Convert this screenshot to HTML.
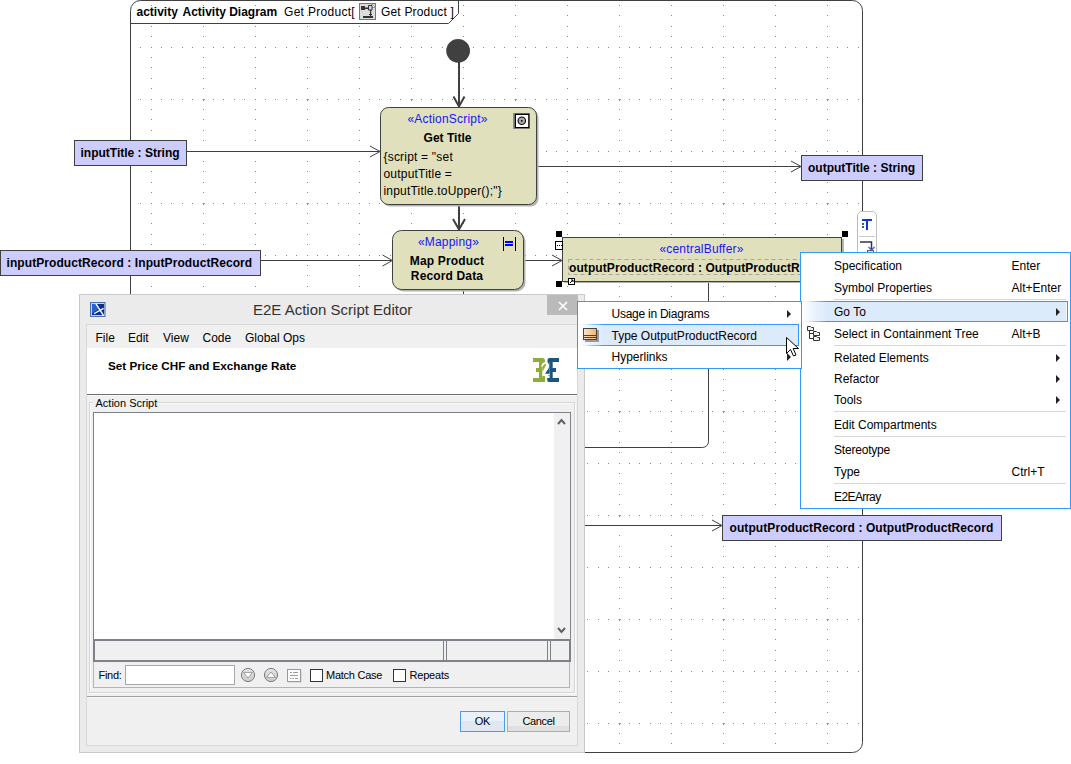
<!DOCTYPE html>
<html><head><meta charset="utf-8">
<style>
html,body{margin:0;padding:0;}
body{width:1071px;height:764px;position:relative;overflow:hidden;background:#fff;font-family:"Liberation Sans",sans-serif;}
.abs{position:absolute;}
svg text{font-family:"Liberation Sans",sans-serif;font-size:12px;}
.t{position:absolute;white-space:pre;font-size:12px;line-height:14px;color:#000;}
.mi{position:absolute;white-space:pre;font-size:12px;line-height:14px;color:#000;}
</style></head><body>
<svg class="abs" style="left:0;top:0" width="1071" height="764" viewBox="0 0 1071 764">
<path d="M140 47h1v1h-1zM140 99h1v1h-1zM140 151h1v1h-1zM140 203h1v1h-1zM140 255h1v1h-1zM140 307h1v1h-1zM140 359h1v1h-1zM140 411h1v1h-1zM140 463h1v1h-1zM140 515h1v1h-1zM140 567h1v1h-1zM140 619h1v1h-1zM140 671h1v1h-1zM140 723h1v1h-1zM151 5h1v1h-1zM151 15h1v1h-1zM151 26h1v1h-1zM151 36h1v1h-1zM151 47h1v1h-1zM151 57h1v1h-1zM151 67h1v1h-1zM151 78h1v1h-1zM151 88h1v1h-1zM151 99h1v1h-1zM151 109h1v1h-1zM151 119h1v1h-1zM151 130h1v1h-1zM151 140h1v1h-1zM151 151h1v1h-1zM151 161h1v1h-1zM151 171h1v1h-1zM151 182h1v1h-1zM151 192h1v1h-1zM151 203h1v1h-1zM151 213h1v1h-1zM151 223h1v1h-1zM151 234h1v1h-1zM151 244h1v1h-1zM151 255h1v1h-1zM151 265h1v1h-1zM151 275h1v1h-1zM151 286h1v1h-1zM151 296h1v1h-1zM151 307h1v1h-1zM151 317h1v1h-1zM151 327h1v1h-1zM151 338h1v1h-1zM151 348h1v1h-1zM151 359h1v1h-1zM151 369h1v1h-1zM151 379h1v1h-1zM151 390h1v1h-1zM151 400h1v1h-1zM151 411h1v1h-1zM151 421h1v1h-1zM151 431h1v1h-1zM151 442h1v1h-1zM151 452h1v1h-1zM151 463h1v1h-1zM151 473h1v1h-1zM151 483h1v1h-1zM151 494h1v1h-1zM151 504h1v1h-1zM151 515h1v1h-1zM151 525h1v1h-1zM151 535h1v1h-1zM151 546h1v1h-1zM151 556h1v1h-1zM151 567h1v1h-1zM151 577h1v1h-1zM151 587h1v1h-1zM151 598h1v1h-1zM151 608h1v1h-1zM151 619h1v1h-1zM151 629h1v1h-1zM151 639h1v1h-1zM151 650h1v1h-1zM151 660h1v1h-1zM151 671h1v1h-1zM151 681h1v1h-1zM151 691h1v1h-1zM151 702h1v1h-1zM151 712h1v1h-1zM151 723h1v1h-1zM151 733h1v1h-1zM151 743h1v1h-1zM161 47h1v1h-1zM161 99h1v1h-1zM161 151h1v1h-1zM161 203h1v1h-1zM161 255h1v1h-1zM161 307h1v1h-1zM161 359h1v1h-1zM161 411h1v1h-1zM161 463h1v1h-1zM161 515h1v1h-1zM161 567h1v1h-1zM161 619h1v1h-1zM161 671h1v1h-1zM161 723h1v1h-1zM171 47h1v1h-1zM171 99h1v1h-1zM171 151h1v1h-1zM171 203h1v1h-1zM171 255h1v1h-1zM171 307h1v1h-1zM171 359h1v1h-1zM171 411h1v1h-1zM171 463h1v1h-1zM171 515h1v1h-1zM171 567h1v1h-1zM171 619h1v1h-1zM171 671h1v1h-1zM171 723h1v1h-1zM182 47h1v1h-1zM182 99h1v1h-1zM182 151h1v1h-1zM182 203h1v1h-1zM182 255h1v1h-1zM182 307h1v1h-1zM182 359h1v1h-1zM182 411h1v1h-1zM182 463h1v1h-1zM182 515h1v1h-1zM182 567h1v1h-1zM182 619h1v1h-1zM182 671h1v1h-1zM182 723h1v1h-1zM192 47h1v1h-1zM192 99h1v1h-1zM192 151h1v1h-1zM192 203h1v1h-1zM192 255h1v1h-1zM192 307h1v1h-1zM192 359h1v1h-1zM192 411h1v1h-1zM192 463h1v1h-1zM192 515h1v1h-1zM192 567h1v1h-1zM192 619h1v1h-1zM192 671h1v1h-1zM192 723h1v1h-1zM203 5h1v1h-1zM203 15h1v1h-1zM203 26h1v1h-1zM203 36h1v1h-1zM203 47h1v1h-1zM203 57h1v1h-1zM203 67h1v1h-1zM203 78h1v1h-1zM203 88h1v1h-1zM203 99h1v1h-1zM203 100h1v1h-1zM203 109h1v1h-1zM203 119h1v1h-1zM203 130h1v1h-1zM203 140h1v1h-1zM203 151h1v1h-1zM203 161h1v1h-1zM203 171h1v1h-1zM203 182h1v1h-1zM203 192h1v1h-1zM203 203h1v1h-1zM203 204h1v1h-1zM203 213h1v1h-1zM203 223h1v1h-1zM203 234h1v1h-1zM203 244h1v1h-1zM203 255h1v1h-1zM203 265h1v1h-1zM203 275h1v1h-1zM203 286h1v1h-1zM203 296h1v1h-1zM203 307h1v1h-1zM203 308h1v1h-1zM203 317h1v1h-1zM203 327h1v1h-1zM203 338h1v1h-1zM203 348h1v1h-1zM203 359h1v1h-1zM203 369h1v1h-1zM203 379h1v1h-1zM203 390h1v1h-1zM203 400h1v1h-1zM203 411h1v1h-1zM203 412h1v1h-1zM203 421h1v1h-1zM203 431h1v1h-1zM203 442h1v1h-1zM203 452h1v1h-1zM203 463h1v1h-1zM203 473h1v1h-1zM203 483h1v1h-1zM203 494h1v1h-1zM203 504h1v1h-1zM203 515h1v1h-1zM203 516h1v1h-1zM203 525h1v1h-1zM203 535h1v1h-1zM203 546h1v1h-1zM203 556h1v1h-1zM203 567h1v1h-1zM203 577h1v1h-1zM203 587h1v1h-1zM203 598h1v1h-1zM203 608h1v1h-1zM203 619h1v1h-1zM203 620h1v1h-1zM203 629h1v1h-1zM203 639h1v1h-1zM203 650h1v1h-1zM203 660h1v1h-1zM203 671h1v1h-1zM203 681h1v1h-1zM203 691h1v1h-1zM203 702h1v1h-1zM203 712h1v1h-1zM203 723h1v1h-1zM203 724h1v1h-1zM203 733h1v1h-1zM203 743h1v1h-1zM204 99h1v1h-1zM204 203h1v1h-1zM204 307h1v1h-1zM204 411h1v1h-1zM204 515h1v1h-1zM204 619h1v1h-1zM204 723h1v1h-1zM213 47h1v1h-1zM213 99h1v1h-1zM213 151h1v1h-1zM213 203h1v1h-1zM213 255h1v1h-1zM213 307h1v1h-1zM213 359h1v1h-1zM213 411h1v1h-1zM213 463h1v1h-1zM213 515h1v1h-1zM213 567h1v1h-1zM213 619h1v1h-1zM213 671h1v1h-1zM213 723h1v1h-1zM223 47h1v1h-1zM223 99h1v1h-1zM223 151h1v1h-1zM223 203h1v1h-1zM223 255h1v1h-1zM223 307h1v1h-1zM223 359h1v1h-1zM223 411h1v1h-1zM223 463h1v1h-1zM223 515h1v1h-1zM223 567h1v1h-1zM223 619h1v1h-1zM223 671h1v1h-1zM223 723h1v1h-1zM234 47h1v1h-1zM234 99h1v1h-1zM234 151h1v1h-1zM234 203h1v1h-1zM234 255h1v1h-1zM234 307h1v1h-1zM234 359h1v1h-1zM234 411h1v1h-1zM234 463h1v1h-1zM234 515h1v1h-1zM234 567h1v1h-1zM234 619h1v1h-1zM234 671h1v1h-1zM234 723h1v1h-1zM244 47h1v1h-1zM244 99h1v1h-1zM244 151h1v1h-1zM244 203h1v1h-1zM244 255h1v1h-1zM244 307h1v1h-1zM244 359h1v1h-1zM244 411h1v1h-1zM244 463h1v1h-1zM244 515h1v1h-1zM244 567h1v1h-1zM244 619h1v1h-1zM244 671h1v1h-1zM244 723h1v1h-1zM255 5h1v1h-1zM255 15h1v1h-1zM255 26h1v1h-1zM255 36h1v1h-1zM255 47h1v1h-1zM255 57h1v1h-1zM255 67h1v1h-1zM255 78h1v1h-1zM255 88h1v1h-1zM255 99h1v1h-1zM255 109h1v1h-1zM255 119h1v1h-1zM255 130h1v1h-1zM255 140h1v1h-1zM255 151h1v1h-1zM255 161h1v1h-1zM255 171h1v1h-1zM255 182h1v1h-1zM255 192h1v1h-1zM255 203h1v1h-1zM255 213h1v1h-1zM255 223h1v1h-1zM255 234h1v1h-1zM255 244h1v1h-1zM255 255h1v1h-1zM255 265h1v1h-1zM255 275h1v1h-1zM255 286h1v1h-1zM255 296h1v1h-1zM255 307h1v1h-1zM255 317h1v1h-1zM255 327h1v1h-1zM255 338h1v1h-1zM255 348h1v1h-1zM255 359h1v1h-1zM255 369h1v1h-1zM255 379h1v1h-1zM255 390h1v1h-1zM255 400h1v1h-1zM255 411h1v1h-1zM255 421h1v1h-1zM255 431h1v1h-1zM255 442h1v1h-1zM255 452h1v1h-1zM255 463h1v1h-1zM255 473h1v1h-1zM255 483h1v1h-1zM255 494h1v1h-1zM255 504h1v1h-1zM255 515h1v1h-1zM255 525h1v1h-1zM255 535h1v1h-1zM255 546h1v1h-1zM255 556h1v1h-1zM255 567h1v1h-1zM255 577h1v1h-1zM255 587h1v1h-1zM255 598h1v1h-1zM255 608h1v1h-1zM255 619h1v1h-1zM255 629h1v1h-1zM255 639h1v1h-1zM255 650h1v1h-1zM255 660h1v1h-1zM255 671h1v1h-1zM255 681h1v1h-1zM255 691h1v1h-1zM255 702h1v1h-1zM255 712h1v1h-1zM255 723h1v1h-1zM255 733h1v1h-1zM255 743h1v1h-1zM265 47h1v1h-1zM265 99h1v1h-1zM265 151h1v1h-1zM265 203h1v1h-1zM265 255h1v1h-1zM265 307h1v1h-1zM265 359h1v1h-1zM265 411h1v1h-1zM265 463h1v1h-1zM265 515h1v1h-1zM265 567h1v1h-1zM265 619h1v1h-1zM265 671h1v1h-1zM265 723h1v1h-1zM275 47h1v1h-1zM275 99h1v1h-1zM275 151h1v1h-1zM275 203h1v1h-1zM275 255h1v1h-1zM275 307h1v1h-1zM275 359h1v1h-1zM275 411h1v1h-1zM275 463h1v1h-1zM275 515h1v1h-1zM275 567h1v1h-1zM275 619h1v1h-1zM275 671h1v1h-1zM275 723h1v1h-1zM286 47h1v1h-1zM286 99h1v1h-1zM286 151h1v1h-1zM286 203h1v1h-1zM286 255h1v1h-1zM286 307h1v1h-1zM286 359h1v1h-1zM286 411h1v1h-1zM286 463h1v1h-1zM286 515h1v1h-1zM286 567h1v1h-1zM286 619h1v1h-1zM286 671h1v1h-1zM286 723h1v1h-1zM296 47h1v1h-1zM296 99h1v1h-1zM296 151h1v1h-1zM296 203h1v1h-1zM296 255h1v1h-1zM296 307h1v1h-1zM296 359h1v1h-1zM296 411h1v1h-1zM296 463h1v1h-1zM296 515h1v1h-1zM296 567h1v1h-1zM296 619h1v1h-1zM296 671h1v1h-1zM296 723h1v1h-1zM307 5h1v1h-1zM307 15h1v1h-1zM307 26h1v1h-1zM307 36h1v1h-1zM307 47h1v1h-1zM307 57h1v1h-1zM307 67h1v1h-1zM307 78h1v1h-1zM307 88h1v1h-1zM307 99h1v1h-1zM307 100h1v1h-1zM307 109h1v1h-1zM307 119h1v1h-1zM307 130h1v1h-1zM307 140h1v1h-1zM307 151h1v1h-1zM307 161h1v1h-1zM307 171h1v1h-1zM307 182h1v1h-1zM307 192h1v1h-1zM307 203h1v1h-1zM307 204h1v1h-1zM307 213h1v1h-1zM307 223h1v1h-1zM307 234h1v1h-1zM307 244h1v1h-1zM307 255h1v1h-1zM307 265h1v1h-1zM307 275h1v1h-1zM307 286h1v1h-1zM307 296h1v1h-1zM307 307h1v1h-1zM307 308h1v1h-1zM307 317h1v1h-1zM307 327h1v1h-1zM307 338h1v1h-1zM307 348h1v1h-1zM307 359h1v1h-1zM307 369h1v1h-1zM307 379h1v1h-1zM307 390h1v1h-1zM307 400h1v1h-1zM307 411h1v1h-1zM307 412h1v1h-1zM307 421h1v1h-1zM307 431h1v1h-1zM307 442h1v1h-1zM307 452h1v1h-1zM307 463h1v1h-1zM307 473h1v1h-1zM307 483h1v1h-1zM307 494h1v1h-1zM307 504h1v1h-1zM307 515h1v1h-1zM307 516h1v1h-1zM307 525h1v1h-1zM307 535h1v1h-1zM307 546h1v1h-1zM307 556h1v1h-1zM307 567h1v1h-1zM307 577h1v1h-1zM307 587h1v1h-1zM307 598h1v1h-1zM307 608h1v1h-1zM307 619h1v1h-1zM307 620h1v1h-1zM307 629h1v1h-1zM307 639h1v1h-1zM307 650h1v1h-1zM307 660h1v1h-1zM307 671h1v1h-1zM307 681h1v1h-1zM307 691h1v1h-1zM307 702h1v1h-1zM307 712h1v1h-1zM307 723h1v1h-1zM307 724h1v1h-1zM307 733h1v1h-1zM307 743h1v1h-1zM308 99h1v1h-1zM308 203h1v1h-1zM308 307h1v1h-1zM308 411h1v1h-1zM308 515h1v1h-1zM308 619h1v1h-1zM308 723h1v1h-1zM317 47h1v1h-1zM317 99h1v1h-1zM317 151h1v1h-1zM317 203h1v1h-1zM317 255h1v1h-1zM317 307h1v1h-1zM317 359h1v1h-1zM317 411h1v1h-1zM317 463h1v1h-1zM317 515h1v1h-1zM317 567h1v1h-1zM317 619h1v1h-1zM317 671h1v1h-1zM317 723h1v1h-1zM327 47h1v1h-1zM327 99h1v1h-1zM327 151h1v1h-1zM327 203h1v1h-1zM327 255h1v1h-1zM327 307h1v1h-1zM327 359h1v1h-1zM327 411h1v1h-1zM327 463h1v1h-1zM327 515h1v1h-1zM327 567h1v1h-1zM327 619h1v1h-1zM327 671h1v1h-1zM327 723h1v1h-1zM338 47h1v1h-1zM338 99h1v1h-1zM338 151h1v1h-1zM338 203h1v1h-1zM338 255h1v1h-1zM338 307h1v1h-1zM338 359h1v1h-1zM338 411h1v1h-1zM338 463h1v1h-1zM338 515h1v1h-1zM338 567h1v1h-1zM338 619h1v1h-1zM338 671h1v1h-1zM338 723h1v1h-1zM348 47h1v1h-1zM348 99h1v1h-1zM348 151h1v1h-1zM348 203h1v1h-1zM348 255h1v1h-1zM348 307h1v1h-1zM348 359h1v1h-1zM348 411h1v1h-1zM348 463h1v1h-1zM348 515h1v1h-1zM348 567h1v1h-1zM348 619h1v1h-1zM348 671h1v1h-1zM348 723h1v1h-1zM359 5h1v1h-1zM359 15h1v1h-1zM359 26h1v1h-1zM359 36h1v1h-1zM359 47h1v1h-1zM359 57h1v1h-1zM359 67h1v1h-1zM359 78h1v1h-1zM359 88h1v1h-1zM359 99h1v1h-1zM359 109h1v1h-1zM359 119h1v1h-1zM359 130h1v1h-1zM359 140h1v1h-1zM359 151h1v1h-1zM359 161h1v1h-1zM359 171h1v1h-1zM359 182h1v1h-1zM359 192h1v1h-1zM359 203h1v1h-1zM359 213h1v1h-1zM359 223h1v1h-1zM359 234h1v1h-1zM359 244h1v1h-1zM359 255h1v1h-1zM359 265h1v1h-1zM359 275h1v1h-1zM359 286h1v1h-1zM359 296h1v1h-1zM359 307h1v1h-1zM359 317h1v1h-1zM359 327h1v1h-1zM359 338h1v1h-1zM359 348h1v1h-1zM359 359h1v1h-1zM359 369h1v1h-1zM359 379h1v1h-1zM359 390h1v1h-1zM359 400h1v1h-1zM359 411h1v1h-1zM359 421h1v1h-1zM359 431h1v1h-1zM359 442h1v1h-1zM359 452h1v1h-1zM359 463h1v1h-1zM359 473h1v1h-1zM359 483h1v1h-1zM359 494h1v1h-1zM359 504h1v1h-1zM359 515h1v1h-1zM359 525h1v1h-1zM359 535h1v1h-1zM359 546h1v1h-1zM359 556h1v1h-1zM359 567h1v1h-1zM359 577h1v1h-1zM359 587h1v1h-1zM359 598h1v1h-1zM359 608h1v1h-1zM359 619h1v1h-1zM359 629h1v1h-1zM359 639h1v1h-1zM359 650h1v1h-1zM359 660h1v1h-1zM359 671h1v1h-1zM359 681h1v1h-1zM359 691h1v1h-1zM359 702h1v1h-1zM359 712h1v1h-1zM359 723h1v1h-1zM359 733h1v1h-1zM359 743h1v1h-1zM369 47h1v1h-1zM369 99h1v1h-1zM369 151h1v1h-1zM369 203h1v1h-1zM369 255h1v1h-1zM369 307h1v1h-1zM369 359h1v1h-1zM369 411h1v1h-1zM369 463h1v1h-1zM369 515h1v1h-1zM369 567h1v1h-1zM369 619h1v1h-1zM369 671h1v1h-1zM369 723h1v1h-1zM379 47h1v1h-1zM379 99h1v1h-1zM379 151h1v1h-1zM379 203h1v1h-1zM379 255h1v1h-1zM379 307h1v1h-1zM379 359h1v1h-1zM379 411h1v1h-1zM379 463h1v1h-1zM379 515h1v1h-1zM379 567h1v1h-1zM379 619h1v1h-1zM379 671h1v1h-1zM379 723h1v1h-1zM390 47h1v1h-1zM390 99h1v1h-1zM390 151h1v1h-1zM390 203h1v1h-1zM390 255h1v1h-1zM390 307h1v1h-1zM390 359h1v1h-1zM390 411h1v1h-1zM390 463h1v1h-1zM390 515h1v1h-1zM390 567h1v1h-1zM390 619h1v1h-1zM390 671h1v1h-1zM390 723h1v1h-1zM400 47h1v1h-1zM400 99h1v1h-1zM400 151h1v1h-1zM400 203h1v1h-1zM400 255h1v1h-1zM400 307h1v1h-1zM400 359h1v1h-1zM400 411h1v1h-1zM400 463h1v1h-1zM400 515h1v1h-1zM400 567h1v1h-1zM400 619h1v1h-1zM400 671h1v1h-1zM400 723h1v1h-1zM411 5h1v1h-1zM411 15h1v1h-1zM411 26h1v1h-1zM411 36h1v1h-1zM411 47h1v1h-1zM411 57h1v1h-1zM411 67h1v1h-1zM411 78h1v1h-1zM411 88h1v1h-1zM411 99h1v1h-1zM411 100h1v1h-1zM411 109h1v1h-1zM411 119h1v1h-1zM411 130h1v1h-1zM411 140h1v1h-1zM411 151h1v1h-1zM411 161h1v1h-1zM411 171h1v1h-1zM411 182h1v1h-1zM411 192h1v1h-1zM411 203h1v1h-1zM411 204h1v1h-1zM411 213h1v1h-1zM411 223h1v1h-1zM411 234h1v1h-1zM411 244h1v1h-1zM411 255h1v1h-1zM411 265h1v1h-1zM411 275h1v1h-1zM411 286h1v1h-1zM411 296h1v1h-1zM411 307h1v1h-1zM411 308h1v1h-1zM411 317h1v1h-1zM411 327h1v1h-1zM411 338h1v1h-1zM411 348h1v1h-1zM411 359h1v1h-1zM411 369h1v1h-1zM411 379h1v1h-1zM411 390h1v1h-1zM411 400h1v1h-1zM411 411h1v1h-1zM411 412h1v1h-1zM411 421h1v1h-1zM411 431h1v1h-1zM411 442h1v1h-1zM411 452h1v1h-1zM411 463h1v1h-1zM411 473h1v1h-1zM411 483h1v1h-1zM411 494h1v1h-1zM411 504h1v1h-1zM411 515h1v1h-1zM411 516h1v1h-1zM411 525h1v1h-1zM411 535h1v1h-1zM411 546h1v1h-1zM411 556h1v1h-1zM411 567h1v1h-1zM411 577h1v1h-1zM411 587h1v1h-1zM411 598h1v1h-1zM411 608h1v1h-1zM411 619h1v1h-1zM411 620h1v1h-1zM411 629h1v1h-1zM411 639h1v1h-1zM411 650h1v1h-1zM411 660h1v1h-1zM411 671h1v1h-1zM411 681h1v1h-1zM411 691h1v1h-1zM411 702h1v1h-1zM411 712h1v1h-1zM411 723h1v1h-1zM411 724h1v1h-1zM411 733h1v1h-1zM411 743h1v1h-1zM412 99h1v1h-1zM412 203h1v1h-1zM412 307h1v1h-1zM412 411h1v1h-1zM412 515h1v1h-1zM412 619h1v1h-1zM412 723h1v1h-1zM421 47h1v1h-1zM421 99h1v1h-1zM421 151h1v1h-1zM421 203h1v1h-1zM421 255h1v1h-1zM421 307h1v1h-1zM421 359h1v1h-1zM421 411h1v1h-1zM421 463h1v1h-1zM421 515h1v1h-1zM421 567h1v1h-1zM421 619h1v1h-1zM421 671h1v1h-1zM421 723h1v1h-1zM431 47h1v1h-1zM431 99h1v1h-1zM431 151h1v1h-1zM431 203h1v1h-1zM431 255h1v1h-1zM431 307h1v1h-1zM431 359h1v1h-1zM431 411h1v1h-1zM431 463h1v1h-1zM431 515h1v1h-1zM431 567h1v1h-1zM431 619h1v1h-1zM431 671h1v1h-1zM431 723h1v1h-1zM442 47h1v1h-1zM442 99h1v1h-1zM442 151h1v1h-1zM442 203h1v1h-1zM442 255h1v1h-1zM442 307h1v1h-1zM442 359h1v1h-1zM442 411h1v1h-1zM442 463h1v1h-1zM442 515h1v1h-1zM442 567h1v1h-1zM442 619h1v1h-1zM442 671h1v1h-1zM442 723h1v1h-1zM452 47h1v1h-1zM452 99h1v1h-1zM452 151h1v1h-1zM452 203h1v1h-1zM452 255h1v1h-1zM452 307h1v1h-1zM452 359h1v1h-1zM452 411h1v1h-1zM452 463h1v1h-1zM452 515h1v1h-1zM452 567h1v1h-1zM452 619h1v1h-1zM452 671h1v1h-1zM452 723h1v1h-1zM463 5h1v1h-1zM463 15h1v1h-1zM463 26h1v1h-1zM463 36h1v1h-1zM463 47h1v1h-1zM463 57h1v1h-1zM463 67h1v1h-1zM463 78h1v1h-1zM463 88h1v1h-1zM463 99h1v1h-1zM463 109h1v1h-1zM463 119h1v1h-1zM463 130h1v1h-1zM463 140h1v1h-1zM463 151h1v1h-1zM463 161h1v1h-1zM463 171h1v1h-1zM463 182h1v1h-1zM463 192h1v1h-1zM463 203h1v1h-1zM463 213h1v1h-1zM463 223h1v1h-1zM463 234h1v1h-1zM463 244h1v1h-1zM463 255h1v1h-1zM463 265h1v1h-1zM463 275h1v1h-1zM463 286h1v1h-1zM463 296h1v1h-1zM463 307h1v1h-1zM463 317h1v1h-1zM463 327h1v1h-1zM463 338h1v1h-1zM463 348h1v1h-1zM463 359h1v1h-1zM463 369h1v1h-1zM463 379h1v1h-1zM463 390h1v1h-1zM463 400h1v1h-1zM463 411h1v1h-1zM463 421h1v1h-1zM463 431h1v1h-1zM463 442h1v1h-1zM463 452h1v1h-1zM463 463h1v1h-1zM463 473h1v1h-1zM463 483h1v1h-1zM463 494h1v1h-1zM463 504h1v1h-1zM463 515h1v1h-1zM463 525h1v1h-1zM463 535h1v1h-1zM463 546h1v1h-1zM463 556h1v1h-1zM463 567h1v1h-1zM463 577h1v1h-1zM463 587h1v1h-1zM463 598h1v1h-1zM463 608h1v1h-1zM463 619h1v1h-1zM463 629h1v1h-1zM463 639h1v1h-1zM463 650h1v1h-1zM463 660h1v1h-1zM463 671h1v1h-1zM463 681h1v1h-1zM463 691h1v1h-1zM463 702h1v1h-1zM463 712h1v1h-1zM463 723h1v1h-1zM463 733h1v1h-1zM463 743h1v1h-1zM473 47h1v1h-1zM473 99h1v1h-1zM473 151h1v1h-1zM473 203h1v1h-1zM473 255h1v1h-1zM473 307h1v1h-1zM473 359h1v1h-1zM473 411h1v1h-1zM473 463h1v1h-1zM473 515h1v1h-1zM473 567h1v1h-1zM473 619h1v1h-1zM473 671h1v1h-1zM473 723h1v1h-1zM483 47h1v1h-1zM483 99h1v1h-1zM483 151h1v1h-1zM483 203h1v1h-1zM483 255h1v1h-1zM483 307h1v1h-1zM483 359h1v1h-1zM483 411h1v1h-1zM483 463h1v1h-1zM483 515h1v1h-1zM483 567h1v1h-1zM483 619h1v1h-1zM483 671h1v1h-1zM483 723h1v1h-1zM494 47h1v1h-1zM494 99h1v1h-1zM494 151h1v1h-1zM494 203h1v1h-1zM494 255h1v1h-1zM494 307h1v1h-1zM494 359h1v1h-1zM494 411h1v1h-1zM494 463h1v1h-1zM494 515h1v1h-1zM494 567h1v1h-1zM494 619h1v1h-1zM494 671h1v1h-1zM494 723h1v1h-1zM504 47h1v1h-1zM504 99h1v1h-1zM504 151h1v1h-1zM504 203h1v1h-1zM504 255h1v1h-1zM504 307h1v1h-1zM504 359h1v1h-1zM504 411h1v1h-1zM504 463h1v1h-1zM504 515h1v1h-1zM504 567h1v1h-1zM504 619h1v1h-1zM504 671h1v1h-1zM504 723h1v1h-1zM515 5h1v1h-1zM515 15h1v1h-1zM515 26h1v1h-1zM515 36h1v1h-1zM515 47h1v1h-1zM515 57h1v1h-1zM515 67h1v1h-1zM515 78h1v1h-1zM515 88h1v1h-1zM515 99h1v1h-1zM515 100h1v1h-1zM515 109h1v1h-1zM515 119h1v1h-1zM515 130h1v1h-1zM515 140h1v1h-1zM515 151h1v1h-1zM515 161h1v1h-1zM515 171h1v1h-1zM515 182h1v1h-1zM515 192h1v1h-1zM515 203h1v1h-1zM515 204h1v1h-1zM515 213h1v1h-1zM515 223h1v1h-1zM515 234h1v1h-1zM515 244h1v1h-1zM515 255h1v1h-1zM515 265h1v1h-1zM515 275h1v1h-1zM515 286h1v1h-1zM515 296h1v1h-1zM515 307h1v1h-1zM515 308h1v1h-1zM515 317h1v1h-1zM515 327h1v1h-1zM515 338h1v1h-1zM515 348h1v1h-1zM515 359h1v1h-1zM515 369h1v1h-1zM515 379h1v1h-1zM515 390h1v1h-1zM515 400h1v1h-1zM515 411h1v1h-1zM515 412h1v1h-1zM515 421h1v1h-1zM515 431h1v1h-1zM515 442h1v1h-1zM515 452h1v1h-1zM515 463h1v1h-1zM515 473h1v1h-1zM515 483h1v1h-1zM515 494h1v1h-1zM515 504h1v1h-1zM515 515h1v1h-1zM515 516h1v1h-1zM515 525h1v1h-1zM515 535h1v1h-1zM515 546h1v1h-1zM515 556h1v1h-1zM515 567h1v1h-1zM515 577h1v1h-1zM515 587h1v1h-1zM515 598h1v1h-1zM515 608h1v1h-1zM515 619h1v1h-1zM515 620h1v1h-1zM515 629h1v1h-1zM515 639h1v1h-1zM515 650h1v1h-1zM515 660h1v1h-1zM515 671h1v1h-1zM515 681h1v1h-1zM515 691h1v1h-1zM515 702h1v1h-1zM515 712h1v1h-1zM515 723h1v1h-1zM515 724h1v1h-1zM515 733h1v1h-1zM515 743h1v1h-1zM516 99h1v1h-1zM516 203h1v1h-1zM516 307h1v1h-1zM516 411h1v1h-1zM516 515h1v1h-1zM516 619h1v1h-1zM516 723h1v1h-1zM525 47h1v1h-1zM525 99h1v1h-1zM525 151h1v1h-1zM525 203h1v1h-1zM525 255h1v1h-1zM525 307h1v1h-1zM525 359h1v1h-1zM525 411h1v1h-1zM525 463h1v1h-1zM525 515h1v1h-1zM525 567h1v1h-1zM525 619h1v1h-1zM525 671h1v1h-1zM525 723h1v1h-1zM535 47h1v1h-1zM535 99h1v1h-1zM535 151h1v1h-1zM535 203h1v1h-1zM535 255h1v1h-1zM535 307h1v1h-1zM535 359h1v1h-1zM535 411h1v1h-1zM535 463h1v1h-1zM535 515h1v1h-1zM535 567h1v1h-1zM535 619h1v1h-1zM535 671h1v1h-1zM535 723h1v1h-1zM546 47h1v1h-1zM546 99h1v1h-1zM546 151h1v1h-1zM546 203h1v1h-1zM546 255h1v1h-1zM546 307h1v1h-1zM546 359h1v1h-1zM546 411h1v1h-1zM546 463h1v1h-1zM546 515h1v1h-1zM546 567h1v1h-1zM546 619h1v1h-1zM546 671h1v1h-1zM546 723h1v1h-1zM556 47h1v1h-1zM556 99h1v1h-1zM556 151h1v1h-1zM556 203h1v1h-1zM556 255h1v1h-1zM556 307h1v1h-1zM556 359h1v1h-1zM556 411h1v1h-1zM556 463h1v1h-1zM556 515h1v1h-1zM556 567h1v1h-1zM556 619h1v1h-1zM556 671h1v1h-1zM556 723h1v1h-1zM567 5h1v1h-1zM567 15h1v1h-1zM567 26h1v1h-1zM567 36h1v1h-1zM567 47h1v1h-1zM567 57h1v1h-1zM567 67h1v1h-1zM567 78h1v1h-1zM567 88h1v1h-1zM567 99h1v1h-1zM567 109h1v1h-1zM567 119h1v1h-1zM567 130h1v1h-1zM567 140h1v1h-1zM567 151h1v1h-1zM567 161h1v1h-1zM567 171h1v1h-1zM567 182h1v1h-1zM567 192h1v1h-1zM567 203h1v1h-1zM567 213h1v1h-1zM567 223h1v1h-1zM567 234h1v1h-1zM567 244h1v1h-1zM567 255h1v1h-1zM567 265h1v1h-1zM567 275h1v1h-1zM567 286h1v1h-1zM567 296h1v1h-1zM567 307h1v1h-1zM567 317h1v1h-1zM567 327h1v1h-1zM567 338h1v1h-1zM567 348h1v1h-1zM567 359h1v1h-1zM567 369h1v1h-1zM567 379h1v1h-1zM567 390h1v1h-1zM567 400h1v1h-1zM567 411h1v1h-1zM567 421h1v1h-1zM567 431h1v1h-1zM567 442h1v1h-1zM567 452h1v1h-1zM567 463h1v1h-1zM567 473h1v1h-1zM567 483h1v1h-1zM567 494h1v1h-1zM567 504h1v1h-1zM567 515h1v1h-1zM567 525h1v1h-1zM567 535h1v1h-1zM567 546h1v1h-1zM567 556h1v1h-1zM567 567h1v1h-1zM567 577h1v1h-1zM567 587h1v1h-1zM567 598h1v1h-1zM567 608h1v1h-1zM567 619h1v1h-1zM567 629h1v1h-1zM567 639h1v1h-1zM567 650h1v1h-1zM567 660h1v1h-1zM567 671h1v1h-1zM567 681h1v1h-1zM567 691h1v1h-1zM567 702h1v1h-1zM567 712h1v1h-1zM567 723h1v1h-1zM567 733h1v1h-1zM567 743h1v1h-1zM577 47h1v1h-1zM577 99h1v1h-1zM577 151h1v1h-1zM577 203h1v1h-1zM577 255h1v1h-1zM577 307h1v1h-1zM577 359h1v1h-1zM577 411h1v1h-1zM577 463h1v1h-1zM577 515h1v1h-1zM577 567h1v1h-1zM577 619h1v1h-1zM577 671h1v1h-1zM577 723h1v1h-1zM587 47h1v1h-1zM587 99h1v1h-1zM587 151h1v1h-1zM587 203h1v1h-1zM587 255h1v1h-1zM587 307h1v1h-1zM587 359h1v1h-1zM587 411h1v1h-1zM587 463h1v1h-1zM587 515h1v1h-1zM587 567h1v1h-1zM587 619h1v1h-1zM587 671h1v1h-1zM587 723h1v1h-1zM598 47h1v1h-1zM598 99h1v1h-1zM598 151h1v1h-1zM598 203h1v1h-1zM598 255h1v1h-1zM598 307h1v1h-1zM598 359h1v1h-1zM598 411h1v1h-1zM598 463h1v1h-1zM598 515h1v1h-1zM598 567h1v1h-1zM598 619h1v1h-1zM598 671h1v1h-1zM598 723h1v1h-1zM608 47h1v1h-1zM608 99h1v1h-1zM608 151h1v1h-1zM608 203h1v1h-1zM608 255h1v1h-1zM608 307h1v1h-1zM608 359h1v1h-1zM608 411h1v1h-1zM608 463h1v1h-1zM608 515h1v1h-1zM608 567h1v1h-1zM608 619h1v1h-1zM608 671h1v1h-1zM608 723h1v1h-1zM619 5h1v1h-1zM619 15h1v1h-1zM619 26h1v1h-1zM619 36h1v1h-1zM619 47h1v1h-1zM619 57h1v1h-1zM619 67h1v1h-1zM619 78h1v1h-1zM619 88h1v1h-1zM619 99h1v1h-1zM619 100h1v1h-1zM619 109h1v1h-1zM619 119h1v1h-1zM619 130h1v1h-1zM619 140h1v1h-1zM619 151h1v1h-1zM619 161h1v1h-1zM619 171h1v1h-1zM619 182h1v1h-1zM619 192h1v1h-1zM619 203h1v1h-1zM619 204h1v1h-1zM619 213h1v1h-1zM619 223h1v1h-1zM619 234h1v1h-1zM619 244h1v1h-1zM619 255h1v1h-1zM619 265h1v1h-1zM619 275h1v1h-1zM619 286h1v1h-1zM619 296h1v1h-1zM619 307h1v1h-1zM619 308h1v1h-1zM619 317h1v1h-1zM619 327h1v1h-1zM619 338h1v1h-1zM619 348h1v1h-1zM619 359h1v1h-1zM619 369h1v1h-1zM619 379h1v1h-1zM619 390h1v1h-1zM619 400h1v1h-1zM619 411h1v1h-1zM619 412h1v1h-1zM619 421h1v1h-1zM619 431h1v1h-1zM619 442h1v1h-1zM619 452h1v1h-1zM619 463h1v1h-1zM619 473h1v1h-1zM619 483h1v1h-1zM619 494h1v1h-1zM619 504h1v1h-1zM619 515h1v1h-1zM619 516h1v1h-1zM619 525h1v1h-1zM619 535h1v1h-1zM619 546h1v1h-1zM619 556h1v1h-1zM619 567h1v1h-1zM619 577h1v1h-1zM619 587h1v1h-1zM619 598h1v1h-1zM619 608h1v1h-1zM619 619h1v1h-1zM619 620h1v1h-1zM619 629h1v1h-1zM619 639h1v1h-1zM619 650h1v1h-1zM619 660h1v1h-1zM619 671h1v1h-1zM619 681h1v1h-1zM619 691h1v1h-1zM619 702h1v1h-1zM619 712h1v1h-1zM619 723h1v1h-1zM619 724h1v1h-1zM619 733h1v1h-1zM619 743h1v1h-1zM620 99h1v1h-1zM620 203h1v1h-1zM620 307h1v1h-1zM620 411h1v1h-1zM620 515h1v1h-1zM620 619h1v1h-1zM620 723h1v1h-1zM629 47h1v1h-1zM629 99h1v1h-1zM629 151h1v1h-1zM629 203h1v1h-1zM629 255h1v1h-1zM629 307h1v1h-1zM629 359h1v1h-1zM629 411h1v1h-1zM629 463h1v1h-1zM629 515h1v1h-1zM629 567h1v1h-1zM629 619h1v1h-1zM629 671h1v1h-1zM629 723h1v1h-1zM639 47h1v1h-1zM639 99h1v1h-1zM639 151h1v1h-1zM639 203h1v1h-1zM639 255h1v1h-1zM639 307h1v1h-1zM639 359h1v1h-1zM639 411h1v1h-1zM639 463h1v1h-1zM639 515h1v1h-1zM639 567h1v1h-1zM639 619h1v1h-1zM639 671h1v1h-1zM639 723h1v1h-1zM650 47h1v1h-1zM650 99h1v1h-1zM650 151h1v1h-1zM650 203h1v1h-1zM650 255h1v1h-1zM650 307h1v1h-1zM650 359h1v1h-1zM650 411h1v1h-1zM650 463h1v1h-1zM650 515h1v1h-1zM650 567h1v1h-1zM650 619h1v1h-1zM650 671h1v1h-1zM650 723h1v1h-1zM660 47h1v1h-1zM660 99h1v1h-1zM660 151h1v1h-1zM660 203h1v1h-1zM660 255h1v1h-1zM660 307h1v1h-1zM660 359h1v1h-1zM660 411h1v1h-1zM660 463h1v1h-1zM660 515h1v1h-1zM660 567h1v1h-1zM660 619h1v1h-1zM660 671h1v1h-1zM660 723h1v1h-1zM671 5h1v1h-1zM671 15h1v1h-1zM671 26h1v1h-1zM671 36h1v1h-1zM671 47h1v1h-1zM671 57h1v1h-1zM671 67h1v1h-1zM671 78h1v1h-1zM671 88h1v1h-1zM671 99h1v1h-1zM671 109h1v1h-1zM671 119h1v1h-1zM671 130h1v1h-1zM671 140h1v1h-1zM671 151h1v1h-1zM671 161h1v1h-1zM671 171h1v1h-1zM671 182h1v1h-1zM671 192h1v1h-1zM671 203h1v1h-1zM671 213h1v1h-1zM671 223h1v1h-1zM671 234h1v1h-1zM671 244h1v1h-1zM671 255h1v1h-1zM671 265h1v1h-1zM671 275h1v1h-1zM671 286h1v1h-1zM671 296h1v1h-1zM671 307h1v1h-1zM671 317h1v1h-1zM671 327h1v1h-1zM671 338h1v1h-1zM671 348h1v1h-1zM671 359h1v1h-1zM671 369h1v1h-1zM671 379h1v1h-1zM671 390h1v1h-1zM671 400h1v1h-1zM671 411h1v1h-1zM671 421h1v1h-1zM671 431h1v1h-1zM671 442h1v1h-1zM671 452h1v1h-1zM671 463h1v1h-1zM671 473h1v1h-1zM671 483h1v1h-1zM671 494h1v1h-1zM671 504h1v1h-1zM671 515h1v1h-1zM671 525h1v1h-1zM671 535h1v1h-1zM671 546h1v1h-1zM671 556h1v1h-1zM671 567h1v1h-1zM671 577h1v1h-1zM671 587h1v1h-1zM671 598h1v1h-1zM671 608h1v1h-1zM671 619h1v1h-1zM671 629h1v1h-1zM671 639h1v1h-1zM671 650h1v1h-1zM671 660h1v1h-1zM671 671h1v1h-1zM671 681h1v1h-1zM671 691h1v1h-1zM671 702h1v1h-1zM671 712h1v1h-1zM671 723h1v1h-1zM671 733h1v1h-1zM671 743h1v1h-1zM681 47h1v1h-1zM681 99h1v1h-1zM681 151h1v1h-1zM681 203h1v1h-1zM681 255h1v1h-1zM681 307h1v1h-1zM681 359h1v1h-1zM681 411h1v1h-1zM681 463h1v1h-1zM681 515h1v1h-1zM681 567h1v1h-1zM681 619h1v1h-1zM681 671h1v1h-1zM681 723h1v1h-1zM691 47h1v1h-1zM691 99h1v1h-1zM691 151h1v1h-1zM691 203h1v1h-1zM691 255h1v1h-1zM691 307h1v1h-1zM691 359h1v1h-1zM691 411h1v1h-1zM691 463h1v1h-1zM691 515h1v1h-1zM691 567h1v1h-1zM691 619h1v1h-1zM691 671h1v1h-1zM691 723h1v1h-1zM702 47h1v1h-1zM702 99h1v1h-1zM702 151h1v1h-1zM702 203h1v1h-1zM702 255h1v1h-1zM702 307h1v1h-1zM702 359h1v1h-1zM702 411h1v1h-1zM702 463h1v1h-1zM702 515h1v1h-1zM702 567h1v1h-1zM702 619h1v1h-1zM702 671h1v1h-1zM702 723h1v1h-1zM712 47h1v1h-1zM712 99h1v1h-1zM712 151h1v1h-1zM712 203h1v1h-1zM712 255h1v1h-1zM712 307h1v1h-1zM712 359h1v1h-1zM712 411h1v1h-1zM712 463h1v1h-1zM712 515h1v1h-1zM712 567h1v1h-1zM712 619h1v1h-1zM712 671h1v1h-1zM712 723h1v1h-1zM723 5h1v1h-1zM723 15h1v1h-1zM723 26h1v1h-1zM723 36h1v1h-1zM723 47h1v1h-1zM723 57h1v1h-1zM723 67h1v1h-1zM723 78h1v1h-1zM723 88h1v1h-1zM723 99h1v1h-1zM723 100h1v1h-1zM723 109h1v1h-1zM723 119h1v1h-1zM723 130h1v1h-1zM723 140h1v1h-1zM723 151h1v1h-1zM723 161h1v1h-1zM723 171h1v1h-1zM723 182h1v1h-1zM723 192h1v1h-1zM723 203h1v1h-1zM723 204h1v1h-1zM723 213h1v1h-1zM723 223h1v1h-1zM723 234h1v1h-1zM723 244h1v1h-1zM723 255h1v1h-1zM723 265h1v1h-1zM723 275h1v1h-1zM723 286h1v1h-1zM723 296h1v1h-1zM723 307h1v1h-1zM723 308h1v1h-1zM723 317h1v1h-1zM723 327h1v1h-1zM723 338h1v1h-1zM723 348h1v1h-1zM723 359h1v1h-1zM723 369h1v1h-1zM723 379h1v1h-1zM723 390h1v1h-1zM723 400h1v1h-1zM723 411h1v1h-1zM723 412h1v1h-1zM723 421h1v1h-1zM723 431h1v1h-1zM723 442h1v1h-1zM723 452h1v1h-1zM723 463h1v1h-1zM723 473h1v1h-1zM723 483h1v1h-1zM723 494h1v1h-1zM723 504h1v1h-1zM723 515h1v1h-1zM723 516h1v1h-1zM723 525h1v1h-1zM723 535h1v1h-1zM723 546h1v1h-1zM723 556h1v1h-1zM723 567h1v1h-1zM723 577h1v1h-1zM723 587h1v1h-1zM723 598h1v1h-1zM723 608h1v1h-1zM723 619h1v1h-1zM723 620h1v1h-1zM723 629h1v1h-1zM723 639h1v1h-1zM723 650h1v1h-1zM723 660h1v1h-1zM723 671h1v1h-1zM723 681h1v1h-1zM723 691h1v1h-1zM723 702h1v1h-1zM723 712h1v1h-1zM723 723h1v1h-1zM723 724h1v1h-1zM723 733h1v1h-1zM723 743h1v1h-1zM724 99h1v1h-1zM724 203h1v1h-1zM724 307h1v1h-1zM724 411h1v1h-1zM724 515h1v1h-1zM724 619h1v1h-1zM724 723h1v1h-1zM733 47h1v1h-1zM733 99h1v1h-1zM733 151h1v1h-1zM733 203h1v1h-1zM733 255h1v1h-1zM733 307h1v1h-1zM733 359h1v1h-1zM733 411h1v1h-1zM733 463h1v1h-1zM733 515h1v1h-1zM733 567h1v1h-1zM733 619h1v1h-1zM733 671h1v1h-1zM733 723h1v1h-1zM743 47h1v1h-1zM743 99h1v1h-1zM743 151h1v1h-1zM743 203h1v1h-1zM743 255h1v1h-1zM743 307h1v1h-1zM743 359h1v1h-1zM743 411h1v1h-1zM743 463h1v1h-1zM743 515h1v1h-1zM743 567h1v1h-1zM743 619h1v1h-1zM743 671h1v1h-1zM743 723h1v1h-1zM754 47h1v1h-1zM754 99h1v1h-1zM754 151h1v1h-1zM754 203h1v1h-1zM754 255h1v1h-1zM754 307h1v1h-1zM754 359h1v1h-1zM754 411h1v1h-1zM754 463h1v1h-1zM754 515h1v1h-1zM754 567h1v1h-1zM754 619h1v1h-1zM754 671h1v1h-1zM754 723h1v1h-1zM764 47h1v1h-1zM764 99h1v1h-1zM764 151h1v1h-1zM764 203h1v1h-1zM764 255h1v1h-1zM764 307h1v1h-1zM764 359h1v1h-1zM764 411h1v1h-1zM764 463h1v1h-1zM764 515h1v1h-1zM764 567h1v1h-1zM764 619h1v1h-1zM764 671h1v1h-1zM764 723h1v1h-1zM775 5h1v1h-1zM775 15h1v1h-1zM775 26h1v1h-1zM775 36h1v1h-1zM775 47h1v1h-1zM775 57h1v1h-1zM775 67h1v1h-1zM775 78h1v1h-1zM775 88h1v1h-1zM775 99h1v1h-1zM775 109h1v1h-1zM775 119h1v1h-1zM775 130h1v1h-1zM775 140h1v1h-1zM775 151h1v1h-1zM775 161h1v1h-1zM775 171h1v1h-1zM775 182h1v1h-1zM775 192h1v1h-1zM775 203h1v1h-1zM775 213h1v1h-1zM775 223h1v1h-1zM775 234h1v1h-1zM775 244h1v1h-1zM775 255h1v1h-1zM775 265h1v1h-1zM775 275h1v1h-1zM775 286h1v1h-1zM775 296h1v1h-1zM775 307h1v1h-1zM775 317h1v1h-1zM775 327h1v1h-1zM775 338h1v1h-1zM775 348h1v1h-1zM775 359h1v1h-1zM775 369h1v1h-1zM775 379h1v1h-1zM775 390h1v1h-1zM775 400h1v1h-1zM775 411h1v1h-1zM775 421h1v1h-1zM775 431h1v1h-1zM775 442h1v1h-1zM775 452h1v1h-1zM775 463h1v1h-1zM775 473h1v1h-1zM775 483h1v1h-1zM775 494h1v1h-1zM775 504h1v1h-1zM775 515h1v1h-1zM775 525h1v1h-1zM775 535h1v1h-1zM775 546h1v1h-1zM775 556h1v1h-1zM775 567h1v1h-1zM775 577h1v1h-1zM775 587h1v1h-1zM775 598h1v1h-1zM775 608h1v1h-1zM775 619h1v1h-1zM775 629h1v1h-1zM775 639h1v1h-1zM775 650h1v1h-1zM775 660h1v1h-1zM775 671h1v1h-1zM775 681h1v1h-1zM775 691h1v1h-1zM775 702h1v1h-1zM775 712h1v1h-1zM775 723h1v1h-1zM775 733h1v1h-1zM775 743h1v1h-1zM785 47h1v1h-1zM785 99h1v1h-1zM785 151h1v1h-1zM785 203h1v1h-1zM785 255h1v1h-1zM785 307h1v1h-1zM785 359h1v1h-1zM785 411h1v1h-1zM785 463h1v1h-1zM785 515h1v1h-1zM785 567h1v1h-1zM785 619h1v1h-1zM785 671h1v1h-1zM785 723h1v1h-1zM795 47h1v1h-1zM795 99h1v1h-1zM795 151h1v1h-1zM795 203h1v1h-1zM795 255h1v1h-1zM795 307h1v1h-1zM795 359h1v1h-1zM795 411h1v1h-1zM795 463h1v1h-1zM795 515h1v1h-1zM795 567h1v1h-1zM795 619h1v1h-1zM795 671h1v1h-1zM795 723h1v1h-1zM806 47h1v1h-1zM806 99h1v1h-1zM806 151h1v1h-1zM806 203h1v1h-1zM806 255h1v1h-1zM806 307h1v1h-1zM806 359h1v1h-1zM806 411h1v1h-1zM806 463h1v1h-1zM806 515h1v1h-1zM806 567h1v1h-1zM806 619h1v1h-1zM806 671h1v1h-1zM806 723h1v1h-1zM816 47h1v1h-1zM816 99h1v1h-1zM816 151h1v1h-1zM816 203h1v1h-1zM816 255h1v1h-1zM816 307h1v1h-1zM816 359h1v1h-1zM816 411h1v1h-1zM816 463h1v1h-1zM816 515h1v1h-1zM816 567h1v1h-1zM816 619h1v1h-1zM816 671h1v1h-1zM816 723h1v1h-1zM827 5h1v1h-1zM827 15h1v1h-1zM827 26h1v1h-1zM827 36h1v1h-1zM827 47h1v1h-1zM827 57h1v1h-1zM827 67h1v1h-1zM827 78h1v1h-1zM827 88h1v1h-1zM827 99h1v1h-1zM827 100h1v1h-1zM827 109h1v1h-1zM827 119h1v1h-1zM827 130h1v1h-1zM827 140h1v1h-1zM827 151h1v1h-1zM827 161h1v1h-1zM827 171h1v1h-1zM827 182h1v1h-1zM827 192h1v1h-1zM827 203h1v1h-1zM827 204h1v1h-1zM827 213h1v1h-1zM827 223h1v1h-1zM827 234h1v1h-1zM827 244h1v1h-1zM827 255h1v1h-1zM827 265h1v1h-1zM827 275h1v1h-1zM827 286h1v1h-1zM827 296h1v1h-1zM827 307h1v1h-1zM827 308h1v1h-1zM827 317h1v1h-1zM827 327h1v1h-1zM827 338h1v1h-1zM827 348h1v1h-1zM827 359h1v1h-1zM827 369h1v1h-1zM827 379h1v1h-1zM827 390h1v1h-1zM827 400h1v1h-1zM827 411h1v1h-1zM827 412h1v1h-1zM827 421h1v1h-1zM827 431h1v1h-1zM827 442h1v1h-1zM827 452h1v1h-1zM827 463h1v1h-1zM827 473h1v1h-1zM827 483h1v1h-1zM827 494h1v1h-1zM827 504h1v1h-1zM827 515h1v1h-1zM827 516h1v1h-1zM827 525h1v1h-1zM827 535h1v1h-1zM827 546h1v1h-1zM827 556h1v1h-1zM827 567h1v1h-1zM827 577h1v1h-1zM827 587h1v1h-1zM827 598h1v1h-1zM827 608h1v1h-1zM827 619h1v1h-1zM827 620h1v1h-1zM827 629h1v1h-1zM827 639h1v1h-1zM827 650h1v1h-1zM827 660h1v1h-1zM827 671h1v1h-1zM827 681h1v1h-1zM827 691h1v1h-1zM827 702h1v1h-1zM827 712h1v1h-1zM827 723h1v1h-1zM827 724h1v1h-1zM827 733h1v1h-1zM827 743h1v1h-1zM828 99h1v1h-1zM828 203h1v1h-1zM828 307h1v1h-1zM828 411h1v1h-1zM828 515h1v1h-1zM828 619h1v1h-1zM828 723h1v1h-1zM837 47h1v1h-1zM837 99h1v1h-1zM837 151h1v1h-1zM837 203h1v1h-1zM837 255h1v1h-1zM837 307h1v1h-1zM837 359h1v1h-1zM837 411h1v1h-1zM837 463h1v1h-1zM837 515h1v1h-1zM837 567h1v1h-1zM837 619h1v1h-1zM837 671h1v1h-1zM837 723h1v1h-1zM847 47h1v1h-1zM847 99h1v1h-1zM847 151h1v1h-1zM847 203h1v1h-1zM847 255h1v1h-1zM847 307h1v1h-1zM847 359h1v1h-1zM847 411h1v1h-1zM847 463h1v1h-1zM847 515h1v1h-1zM847 567h1v1h-1zM847 619h1v1h-1zM847 671h1v1h-1zM847 723h1v1h-1zM858 47h1v1h-1zM858 99h1v1h-1zM858 151h1v1h-1zM858 203h1v1h-1zM858 255h1v1h-1zM858 307h1v1h-1zM858 359h1v1h-1zM858 411h1v1h-1zM858 463h1v1h-1zM858 515h1v1h-1zM858 567h1v1h-1zM858 619h1v1h-1zM858 671h1v1h-1zM858 723h1v1h-1z" fill="#8a8a8a"/>
<!-- frame -->
<path d="M130.5 752.5V10.5A10 10 0 0 1 140.5 0.5H852.5A10 10 0 0 1 862.5 10.5V742.5A10 10 0 0 1 852.5 752.5H130.5" fill="none" stroke="#404040" stroke-width="1"/>
<path d="M130.5 23.5H448.5L458.5 13.5V0" fill="none" stroke="#404040" stroke-width="1"/>
<text x="136.5" y="16" font-weight="bold">activity</text>
<text x="182.5" y="16" font-weight="bold">Activity Diagram</text>
<text x="284" y="16" letter-spacing="0.3">Get Product[</text>
<text x="381" y="16" letter-spacing="0.18">Get Product ]</text>
<!-- header icon -->
<rect x="359.5" y="3.5" width="16" height="16" fill="#dcdcdc" stroke="#777"/>
<path d="M371.5 3.5L375.5 7.5H371.5Z" fill="#fff" stroke="#888" stroke-width="0.8"/>
<rect x="361" y="6" width="4" height="4" fill="#333"/>
<rect x="365" y="7.5" width="3" height="1.5" fill="#333"/>
<path d="M368.5 5.5h3.5v4.5h-3.5z" fill="#c8dcf0" stroke="#333"/>
<rect x="370" y="10" width="1.2" height="7" fill="#333"/>
<rect x="369" y="14" width="3" height="1" fill="#333"/>
<rect x="363" y="16" width="10" height="2" fill="#333"/>

<!-- initial node -->
<circle cx="458.1" cy="50.8" r="11.9" fill="#404040"/>
<!-- control flows -->
<path d="M459 62V106 M453.5 96.5L459 106.5L464.5 96.5" fill="none" stroke="#404040" stroke-width="2"/>
<path d="M459 205V229 M453 219L459 229.5L465 219" fill="none" stroke="#404040" stroke-width="2"/>
<!-- object flows -->
<path d="M187 151.5H379.5 M370 146L380 151.5L370 157" fill="none" stroke="#404040"/>
<path d="M537 166.5H801 M791 161L801 166.5L791 172" fill="none" stroke="#404040"/>
<path d="M261 260.5H391.5 M382.5 255L392.5 260.5L382.5 266" fill="none" stroke="#404040"/>
<path d="M524 260.5H561 M552 255L562 260.5L552 266" fill="none" stroke="#404040"/>
<path d="M463.5 290V300" fill="none" stroke="#404040"/>
<path d="M708.5 283V441.5A6 6 0 0 1 702.5 447.5H580" fill="none" stroke="#404040"/>
<path d="M580 525.5H721 M712 520L722 525.5L712 531" fill="none" stroke="#404040"/>

<!-- Get Title action -->
<rect x="382.5" y="109.5" width="156" height="97" rx="8" fill="#b3b3b3"/>
<rect x="380.5" y="107.5" width="156" height="97" rx="8" fill="#e1e0bd" stroke="#404040"/>
<text x="447.5" y="123" text-anchor="middle" fill="#1414ff" letter-spacing="0.2">«ActionScript»</text>
<text x="447.5" y="142" text-anchor="middle" font-weight="bold">Get Title</text>
<text x="383.5" y="161" letter-spacing="0.2">{script = "set</text>
<text x="383.5" y="178" letter-spacing="0.2">outputTitle =</text>
<text x="383.5" y="194.5" letter-spacing="0.2">inputTitle.toUpper();"}</text>
<rect x="513" y="113" width="17" height="16" fill="#8a8a8a"/>
<rect x="514.8" y="113.7" width="14.6" height="14.4" fill="#000"/>
<rect x="516" y="115" width="12.2" height="12" fill="#fff"/>
<circle cx="521.8" cy="120.8" r="4.3" fill="#000"/>
<circle cx="521.8" cy="120.8" r="3.2" fill="#a8a8a8"/>
<circle cx="521.8" cy="120.8" r="0.9" fill="#000"/>

<!-- Map Product action -->
<rect x="394.5" y="232.5" width="131" height="59" rx="9" fill="#b3b3b3"/>
<rect x="392.5" y="230.5" width="131" height="59" rx="9" fill="#e1e0bd" stroke="#404040"/>
<text x="448.5" y="246" text-anchor="middle" fill="#1414ff" letter-spacing="0.2">«Mapping»</text>
<text x="447" y="265" text-anchor="middle" font-weight="bold" letter-spacing="0.15">Map Product</text>
<text x="447" y="280" text-anchor="middle" font-weight="bold" letter-spacing="0.15">Record Data</text>
<rect x="503" y="237" width="1" height="14" fill="#000"/>
<rect x="515" y="237" width="1" height="14" fill="#000"/>
<rect x="505" y="241" width="8" height="2" fill="#0000ff"/>
<rect x="505" y="244" width="8" height="2" fill="#0000ff"/>

<!-- central buffer -->
<rect x="564" y="239" width="280" height="44" fill="#b3b3b3"/>
<rect x="562.5" y="237.5" width="279" height="44" fill="#e1e0bd" stroke="#404040"/>
<text x="701.5" y="252.7" text-anchor="middle" fill="#1414ff" letter-spacing="0.2">«centralBuffer»</text>
<rect x="568.5" y="259.5" width="270" height="15" fill="none" stroke="#a8a8a0" stroke-dasharray="4 3"/>
<text x="569" y="272" font-weight="bold" letter-spacing="0.08">outputProductRecord : OutputProductRecord</text>
<rect x="556" y="231" width="6" height="6" fill="#000"/>
<rect x="556" y="281" width="6" height="6" fill="#000"/>
<rect x="842" y="231" width="6" height="6" fill="#000"/>
<rect x="555.5" y="241.5" width="7" height="8" fill="#fff" stroke="#000"/>
<path d="M557 245h1v1h-1z M559 245h1v1h-1z M561 245h1v1h-1z" fill="#000"/>
<rect x="568.5" y="278.5" width="6" height="6" fill="#fff" stroke="#000"/>
<path d="M570 283l3-3 M571 280h2v2" fill="none" stroke="#000"/>

<!-- smart manipulator -->
<path d="M857.5 260V214.5L860.5 211.5H873.5L876.5 214.5V260" fill="#fff" stroke="#bdbdbd"/>
<path d="M859 236.5H875" stroke="#c8c8c8"/>
<path d="M862 220H872 M867 220V230" stroke="#0a3ccc" stroke-width="2" fill="none"/>
<rect x="862" y="223" width="2" height="2" fill="#555"/>
<rect x="862" y="226" width="2" height="2" fill="#555"/>
<path d="M860 242H871.5V249.5" stroke="#2e3550" stroke-width="1.5" fill="none"/>
<path d="M868.5 247L871.5 250L874.5 247" stroke="#3a5ae0" stroke-width="1.3" fill="none"/>
<rect x="867.5" y="250.5" width="6" height="3" fill="#e1e0bd" stroke="#444" stroke-width="0.8"/>

<!-- pins -->
<rect x="74.5" y="140.5" width="112" height="25" fill="#ccccff" stroke="#404040"/>
<text x="80.5" y="157" font-weight="bold">inputTitle : String</text>
<rect x="801.5" y="155.5" width="121" height="25" fill="#ccccff" stroke="#404040"/>
<text x="808" y="172" font-weight="bold">outputTitle : String</text>
<rect x="0.5" y="250.5" width="260" height="25" fill="#ccccff" stroke="#404040"/>
<text x="6.5" y="267" font-weight="bold" letter-spacing="0.08">inputProductRecord : InputProductRecord</text>
<rect x="722.5" y="515.5" width="279" height="25" fill="#ccccff" stroke="#404040"/>
<text x="729.5" y="532" font-weight="bold" letter-spacing="0.08">outputProductRecord : OutputProductRecord</text>
</svg>

<!-- ============ dialog ============ -->
<div class="abs" style="left:79px;top:294px;width:504px;height:457px;border:1px solid #c9c9c9;background:#ebebeb;"></div>
<div class="abs" style="left:547px;top:295px;width:31px;height:20px;background:#bababa;"></div>
<svg class="abs" style="left:557px;top:300px" width="12" height="12"><path d="M2 2L10 10M10 2L2 10" stroke="#fff" stroke-width="1.6"/></svg>
<svg class="abs" style="left:86px;top:298px" width="24" height="24">
<rect x="4.5" y="4.5" width="14.5" height="14" fill="#c5d2ea" stroke="#4e6ca8"/>
<rect x="6" y="6" width="12" height="11" fill="#0b2f8f"/>
<path d="M6 6H11L13 11L6 15.5Z" fill="#2464cc"/>
<path d="M9.7 5.3L17.6 17.6 M7.9 15.7L17.6 10.4" stroke="#fff" stroke-width="1.3"/>
</svg>
<div class="t" style="left:253px;top:301px;font-size:15px;line-height:18px;color:#333;">E2E Action Script Editor</div>
<!-- inner -->
<div class="abs" style="left:86px;top:324px;width:490px;height:420px;border:1px solid #d9d9d9;background:#f0f0f0;"></div>
<div class="t" style="left:95.5px;top:331px;">File</div>
<div class="t" style="left:128px;top:331px;">Edit</div>
<div class="t" style="left:163px;top:331px;">View</div>
<div class="t" style="left:202.5px;top:331px;">Code</div>
<div class="t" style="left:245px;top:331px;">Global Ops</div>
<div class="abs" style="left:87px;top:348px;width:490px;height:46px;background:#fff;"></div>
<div class="abs" style="left:87px;top:394px;width:490px;height:1px;background:#707070;"></div>
<div class="abs" style="left:87px;top:395px;width:490px;height:1px;background:#fafafa;"></div>
<div class="t" style="left:108px;top:359px;font-weight:bold;font-size:11.7px;">Set Price CHF and Exchange Rate</div>
<svg class="abs" style="left:530px;top:355px" width="32" height="30">
<g transform="translate(-530 -355)">
<path d="M533 358H543Q545 358 545 360.5V362H542.3V368H542V372H542.3V378H545V382H533V378H539V372H536V368H539V362H533Z" fill="#8fad3a"/>
<path d="M559 358H549.5Q547.5 358 547.5 360V362H549.6V368H549.6V372H549.6V378H547.2V380Q547.2 382 549 382H559V378H552.7V372H556V368H552.7V362H559Z" fill="#1b567c"/>
<path d="M542.3 362H545L546 365L542.3 372Z" fill="#8fad3a"/>
<path d="M549.6 362H547.5L548.5 366L545 374L549.6 376Z" fill="#1b567c"/>
<path d="M542.3 376V378H545V376Z" fill="#8fad3a"/>
<path d="M541.8 366.5Q543.5 362.5 546.5 363Q549.5 364.5 547.5 368.5L543.2 374.5H549.8" fill="none" stroke="#fff" stroke-width="1.7" stroke-linejoin="round"/>
</g></svg>
<!-- group -->
<div class="abs" style="left:89px;top:402px;width:484px;height:289px;border:1px solid #d5d5d5;box-shadow:inset 1px 1px 0 #fbfbfb,1px 1px 0 #fbfbfb;"></div>
<div class="abs" style="left:93px;top:398px;width:64px;height:8px;background:#f0f0f0;"></div>
<div class="t" style="left:95.5px;top:397px;font-size:11px;line-height:13px;">Action Script</div>
<!-- text area -->
<div class="abs" style="left:93px;top:412px;width:476px;height:227px;border:1px solid #7d8288;border-bottom:none;background:#fff;"></div>
<div class="abs" style="left:554px;top:413px;width:16px;height:226px;background:#f0f0f0;"></div>
<svg class="abs" style="left:554px;top:413px" width="16" height="226">
<path d="M4 11L7.5 7L11 11" fill="none" stroke="#606060" stroke-width="2"/>
<path d="M4 215L7.5 219L11 215" fill="none" stroke="#606060" stroke-width="2"/>
</svg>
<!-- status bar -->
<div class="abs" style="left:93px;top:639px;width:474px;height:19px;border:2px solid #7d8288;background:#f0f0f0;"></div>
<div class="abs" style="left:443px;top:641px;width:1px;height:19px;background:#7d8288;"></div>
<div class="abs" style="left:446px;top:641px;width:1px;height:19px;background:#7d8288;"></div>
<div class="abs" style="left:547px;top:641px;width:1px;height:19px;background:#7d8288;"></div>
<div class="abs" style="left:550px;top:641px;width:1px;height:19px;background:#7d8288;"></div>
<!-- find panel -->
<div class="abs" style="left:93px;top:662px;width:475px;height:25px;border:1px solid #b4b4b4;border-top:none;background:#f0f0f0;"></div>
<div class="t" style="left:98.5px;top:668px;font-size:11px;letter-spacing:-0.3px;">Find:</div>
<div class="abs" style="left:125px;top:665px;width:108px;height:18px;border:1px solid #a8a8a8;background:#fff;"></div>
<svg class="abs" style="left:238px;top:664px" width="70" height="22">
<defs><linearGradient id="cg" x1="0" y1="0" x2="0" y2="1"><stop offset="0" stop-color="#e4e4e4"/><stop offset="1" stop-color="#cbcbcb"/></linearGradient></defs>
<circle cx="10" cy="11" r="6.6" fill="url(#cg)" stroke="#7c7c7c"/>
<path d="M5.6 8.6H14.4L10 14Z" fill="#fff" stroke="#8a8a8a" stroke-width="0.8" stroke-linejoin="round"/>
<circle cx="33" cy="11" r="6.6" fill="url(#cg)" stroke="#7c7c7c"/>
<path d="M28.6 13.4H37.4L33 8Z" fill="#fff" stroke="#8a8a8a" stroke-width="0.8" stroke-linejoin="round"/>
<rect x="50.5" y="6.5" width="13" height="12" fill="#c8c8c8"/>
<rect x="49.5" y="5.5" width="13" height="12" fill="#fbfbfb" stroke="#999"/>
<path d="M52 8.5H54 M55 8.5H60 M52 11.5H60 M52 14.5H53.5 M54.5 14.5H56 M57 14.5H60" stroke="#9c9c9c"/>
</svg>
<div class="abs" style="left:310px;top:669px;width:11px;height:11px;border:1px solid #333;background:#fff;"></div>
<div class="t" style="left:326px;top:668px;font-size:11px;letter-spacing:-0.25px;">Match Case</div>
<div class="abs" style="left:393px;top:669px;width:11px;height:11px;border:1px solid #333;background:#fff;"></div>
<div class="t" style="left:409.5px;top:668px;font-size:11px;letter-spacing:-0.2px;">Repeats</div>
<!-- separator & buttons -->
<div class="abs" style="left:87px;top:696px;width:490px;height:1px;background:#a0a0a0;"></div>
<div class="abs" style="left:87px;top:697px;width:490px;height:1px;background:#fafafa;"></div>
<div class="abs" style="left:460px;top:711px;width:43px;height:19px;border:1px solid #4c9be8;background:linear-gradient(#e9f1fa 0,#e9f1fa 50%,#dfe8f2 50%,#dfe8f2 100%);"></div>
<div class="t" style="left:460px;top:714px;width:45px;text-align:center;font-size:11px;letter-spacing:-0.2px;">OK</div>
<div class="abs" style="left:507px;top:711px;width:61px;height:19px;border:1px solid #adadad;background:linear-gradient(#ececec 0,#ececec 75%,#e0e0e0 75%);"></div>
<div class="t" style="left:507px;top:714px;width:63px;text-align:center;font-size:11px;letter-spacing:-0.4px;">Cancel</div>

<!-- ============ context menu ============ -->
<div class="abs" style="left:800px;top:252px;width:269px;height:255px;border:1px solid #3399ff;background:#fff;"></div>
<div class="mi" style="left:834px;top:259px;">Specification</div>
<div class="mi" style="left:1011.5px;top:259px;">Enter</div>
<div class="mi" style="left:834px;top:281px;">Symbol Properties</div>
<div class="mi" style="left:1011.5px;top:281px;">Alt+Enter</div>
<div class="abs" style="left:834px;top:299px;width:232px;height:1px;background:#d7d7d7;"></div>
<div class="abs" style="left:803px;top:301px;width:265px;height:21px;background:linear-gradient(90deg,#f4f9ff 0,#e9f3fe 5px,#b8dcfb 9px,#7fbff9 15px,#3399ff 24px,#3399ff 100%);"></div>
<div class="abs" style="left:803px;top:302px;width:264px;height:19px;background:linear-gradient(90deg,#fbfdff 0,#f5faff 4px,#eaf4fe 10px,#e3effd 16px,#dcebfc 24px,#dcebfc 100%);box-shadow:inset -1px 0 0 #f0f7ff;"></div>
<div class="mi" style="left:834px;top:305px;">Go To</div>
<svg class="abs" style="left:1055px;top:307px" width="6" height="10"><path d="M1 1L5 5L1 9Z" fill="#222"/></svg>
<svg class="abs" style="left:802px;top:322px" width="24" height="24">
<path d="M7.5 8.5V16.5H11.5 M7.5 11.5H11.5" fill="none" stroke="#333"/>
<path d="M5.5 4.5H8.5L9.5 5.5H11.5V8.5H5.5Z M11.5 9.5H14.5L15.5 10.5H17.5V13.5H11.5Z M11.5 14.5H14.5L15.5 15.5H17.5V18.5H11.5Z" fill="#f2f2f2" stroke="#333"/>
</svg>
<div class="mi" style="left:834px;top:327px;">Select in Containment Tree</div>
<div class="mi" style="left:1011.5px;top:327px;">Alt+B</div>
<div class="abs" style="left:834px;top:345px;width:232px;height:1px;background:#d7d7d7;"></div>
<div class="mi" style="left:834px;top:351px;">Related Elements</div>
<svg class="abs" style="left:1055px;top:353px" width="6" height="10"><path d="M1 1L5 5L1 9Z" fill="#222"/></svg>
<div class="mi" style="left:834px;top:372px;">Refactor</div>
<svg class="abs" style="left:1055px;top:374px" width="6" height="10"><path d="M1 1L5 5L1 9Z" fill="#222"/></svg>
<div class="mi" style="left:834px;top:393px;">Tools</div>
<svg class="abs" style="left:1055px;top:395px" width="6" height="10"><path d="M1 1L5 5L1 9Z" fill="#222"/></svg>
<div class="abs" style="left:834px;top:411px;width:232px;height:1px;background:#d7d7d7;"></div>
<div class="mi" style="left:834px;top:418px;">Edit Compartments</div>
<div class="abs" style="left:834px;top:436px;width:232px;height:1px;background:#d7d7d7;"></div>
<div class="mi" style="left:834px;top:443px;letter-spacing:-0.2px;">Stereotype</div>
<div class="mi" style="left:834px;top:465px;">Type</div>
<div class="mi" style="left:1011.5px;top:465px;">Ctrl+T</div>
<div class="abs" style="left:834px;top:483px;width:232px;height:1px;background:#d7d7d7;"></div>
<div class="mi" style="left:834px;top:490px;letter-spacing:-0.6px;">E2EArray</div>

<!-- ============ submenu ============ -->
<div class="abs" style="left:577px;top:301px;width:223px;height:66px;border:1px solid #3399ff;background:#fff;"></div>
<div class="mi" style="left:611.5px;top:307px;letter-spacing:-0.25px;">Usage in Diagrams</div>
<svg class="abs" style="left:786px;top:309px" width="6" height="10"><path d="M1 1L5 5L1 9Z" fill="#222"/></svg>
<div class="abs" style="left:580px;top:324px;width:219px;height:22px;background:linear-gradient(90deg,#f4f9ff 0,#e9f3fe 5px,#b8dcfb 9px,#7fbff9 15px,#3399ff 24px,#3399ff 100%);"></div>
<div class="abs" style="left:580px;top:325px;width:218px;height:20px;background:linear-gradient(90deg,#fbfdff 0,#f5faff 4px,#eaf4fe 10px,#e3effd 16px,#dcebfc 24px,#dcebfc 100%);"></div>
<svg class="abs" style="left:582px;top:327px" width="18" height="16">
<defs><linearGradient id="og" x1="0" y1="0" x2="1" y2="0"><stop offset="0" stop-color="#fbe6cf"/><stop offset="1" stop-color="#f2b468"/></linearGradient></defs>
<rect x="3" y="3" width="14" height="12" fill="#9a9a9a"/>
<rect x="1.5" y="1.5" width="13" height="11" fill="url(#og)" stroke="#444"/>
<rect x="2" y="8" width="12" height="1" fill="#444"/>
<rect x="2" y="10" width="12" height="1" fill="#444"/>
</svg>
<div class="mi" style="left:611.5px;top:329px;">Type OutputProductRecord</div>
<div class="mi" style="left:611.5px;top:350px;">Hyperlinks</div>
<svg class="abs" style="left:786px;top:352px" width="6" height="10"><path d="M1 1L5 5L1 9Z" fill="#222"/></svg>

<!-- cursor -->
<svg class="abs" style="left:785px;top:336px" width="16" height="22">
<path d="M1.5 1.5V17.5L5.5 13.5L8.5 20L11 19L8.2 12.5H13.5Z" fill="#fff" stroke="#000" stroke-width="1"/>
</svg>
</body></html>
